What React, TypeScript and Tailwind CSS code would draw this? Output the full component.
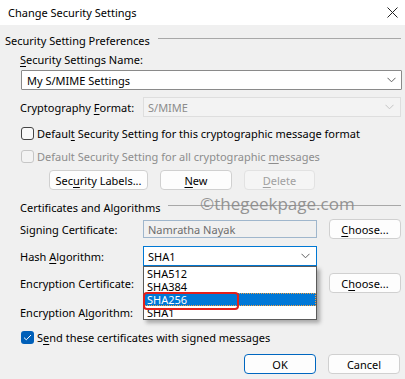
import React from "react";

const U = ({ children }: { children: React.ReactNode }) => (
  <span className="underline underline-offset-2">{children}</span>
);

const Btn = ({
  children,
  w = "w-[72px]",
  disabled = false,
  primary = false,
}: {
  children: React.ReactNode;
  w?: string;
  disabled?: boolean;
  primary?: boolean;
}) => (
  <div
    className={`${w} h-[20px] flex items-center justify-center rounded-[4px] border whitespace-nowrap ${
      primary
        ? "border-[#0067c0] bg-[#fdfdfd] text-black"
        : disabled
        ? "border-[#e2e2e2] bg-[#f5f5f5] text-[#a0a0a0]"
        : "border-[#d0d0d0] bg-[#fdfdfd] text-black"
    }`}
  >
    {children}
  </div>
);

const Chevron = ({ color = "#606060" }: { color?: string }) => (
  <svg width="9" height="6" viewBox="0 0 9 6" fill="none">
    <path d="M0.5 0.8 L4.5 4.8 L8.5 0.8" stroke={color} strokeWidth="1" />
  </svg>
);

const CheckBox = ({
  checked = false,
  disabled = false,
}: {
  checked?: boolean;
  disabled?: boolean;
}) => {
  if (checked)
    return (
      <div className="w-[13px] h-[13px] shrink-0 rounded-[3px] bg-[#005fb8] flex items-center justify-center">
        <svg width="9" height="7" viewBox="0 0 9 7" fill="none">
          <path d="M1 3.6 L3.3 5.8 L8 1" stroke="#fff" strokeWidth="1" />
        </svg>
      </div>
    );
  return (
    <div
      className={`w-[13px] h-[13px] shrink-0 rounded-[3px] border ${
        disabled ? "border-[#c6c6c6] bg-[#f3f3f3]" : "border-[#454545] bg-[#f9f9f9]"
      }`}
    />
  );
};

const GroupHeader = ({
  title,
  children,
}: {
  title: string;
  children?: React.ReactNode;
}) => (
  <div className="relative flex items-center h-[16px] gap-[8px]">
    <span className="whitespace-nowrap">{title}</span>
    <div className="flex-1 h-px bg-[#a8a8a8] mt-[-3px]" />
    {children}
  </div>
);

const items = ["SHA512", "SHA384", "SHA256", "SHA1"];

export default function App() {
  return (
    <div
      className="w-[405px] h-[379px] bg-[#f0f0f0] text-[11px] text-black leading-none overflow-hidden flex flex-col whitespace-nowrap"
      style={{ fontFamily: '"Noto Sans", "Open Sans", sans-serif' }}
    >
      {/* title bar */}
      <div className="h-[25px] bg-white flex items-center justify-between pl-[8px] pr-[7px] shrink-0">
        <span className="text-[11px]">Change Security Settings</span>
        <svg width="11" height="11" viewBox="0 0 11 11" fill="none">
          <path d="M0.5 0.5 L10.5 10.5 M10.5 0.5 L0.5 10.5" stroke="#222" strokeWidth="1" />
        </svg>
      </div>

      <div className="flex flex-col pl-[5px] pr-[4px]">
        <div className="mt-[7px]">
          <GroupHeader title="Security Setting Preferences" />
        </div>

        <div className="pl-[15px] flex flex-col">
          <div className="mt-[4px] h-[14px] flex items-center">
            <span>
              <U>S</U>ecurity Settings Name:
            </span>
          </div>

          <div className="mt-[4px] h-[20px] w-[381px] ml-px border border-[#8a8a8a] bg-white flex items-center justify-between pl-[5px] pr-[5px] rounded-[1px]">
            <span>My S/MIME Settings</span>
            <Chevron />
          </div>

          <div className="mt-[7px] h-[20px] flex items-center">
            <span className="w-[123px] shrink-0">
              Cryptography <U>F</U>ormat:
            </span>
            <div className="w-[258px] h-[20px] border border-[#dedede] bg-[#f3f3f3] flex items-center justify-between pl-[4px] pr-[6px] text-[#8c8c8c]">
              <span>S/MIME</span>
              <Chevron color="#c4c4c4" />
            </div>
          </div>

          <div className="mt-[9px] h-[14px] flex items-center gap-[3px] ml-px">
            <CheckBox />
            <span>
              Defaul<U>t</U> Security Setting for this cryptographic message format
            </span>
          </div>

          <div className="mt-[9px] h-[14px] flex items-center gap-[3px] ml-px text-[#8d8d8d]">
            <CheckBox disabled />
            <span>
              Default Security Setting for all cryptographic <U>m</U>essages
            </span>
          </div>

          <div className="mt-[7px] h-[20px] flex items-center pl-[29px] gap-[12px]">
            <Btn w="w-[99px]">
              Sec<U>u</U>rity Labels...
            </Btn>
            <Btn>
              <U>N</U>ew
            </Btn>
            <Btn w="w-[71px]" disabled>
              <U>D</U>elete
            </Btn>
          </div>
        </div>

        <div className="mt-[9px] pl-[15px]">
          <GroupHeader title="Certificates and Algorithms">
            <span
              className="absolute left-[180px] top-[-4px] text-[17px] text-[#8a8a8a] opacity-90"
              style={{ fontFamily: '"Open Sans", sans-serif' }}
            >
              ©thegeekpage.com
            </span>
          </GroupHeader>
        </div>

        <div className="pl-[15px] flex flex-col">
          <div className="mt-[4px] h-[20px] flex items-center">
            <span className="w-[123px] shrink-0">Signing Certificate:</span>
            <div className="w-[174px] h-[18px] border border-[#9fb6cc] bg-[#f0f0f0] flex items-center pl-[4px] text-[#6d6d6d]">
              Namratha Nayak
            </div>
            <div className="ml-[12px]">
              <Btn>
                <U>C</U>hoose...
              </Btn>
            </div>
          </div>

          <div className="mt-[7px] h-[20px] flex items-center relative z-10">
            <span className="w-[123px] shrink-0">
              Hash <U>A</U>lgorithm:
            </span>
            <div className="relative w-[174px] h-[20px]">
              <div className="w-full h-full border border-[#0078d4] bg-white flex items-center justify-between pl-[4px] pr-[6px]">
                <span>SHA1</span>
                <Chevron />
              </div>
              <div className="absolute left-0 top-[20px] w-full border border-[#5a5a5a] bg-white flex flex-col shadow-[3px_3px_4px_rgba(0,0,0,0.3)]">
                {items.map((it) =>
                  it === "SHA256" ? (
                    <div
                      key={it}
                      className="h-[13px] bg-[#0078d7] text-white flex items-center pl-[2px] border border-dotted border-[#f5a040]"
                    >
                      {it}
                    </div>
                  ) : (
                    <div key={it} className="h-[13px] flex items-center pl-[3px]">
                      {it}
                    </div>
                  )
                )}
                <div className="absolute left-[-1px] top-[25px] w-[96px] h-[18px] border-2 border-[#e3201b] rounded-[4px]" />
              </div>
            </div>
          </div>

          <div className="mt-[7px] h-[20px] flex items-center">
            <span className="w-[123px] shrink-0">Encryption Certificate:</span>
            <div className="w-[174px]" />
            <div className="ml-[12px]">
              <Btn>
                C<U>h</U>oose...
              </Btn>
            </div>
          </div>

          <div className="mt-[9px] h-[20px] flex items-center">
            <span>
              Encryption A<U>l</U>gorithm:
            </span>
          </div>

          <div className="mt-[8px] h-[14px] flex items-center gap-[3px] ml-px">
            <CheckBox checked />
            <span>
              S<U>e</U>nd these certificates with signed messages
            </span>
          </div>

          <div className="mt-[10px] h-[20px] flex items-center justify-end gap-[12px] pr-px">
            <Btn primary>OK</Btn>
            <Btn>Cancel</Btn>
          </div>
        </div>
      </div>
    </div>
  );
}
